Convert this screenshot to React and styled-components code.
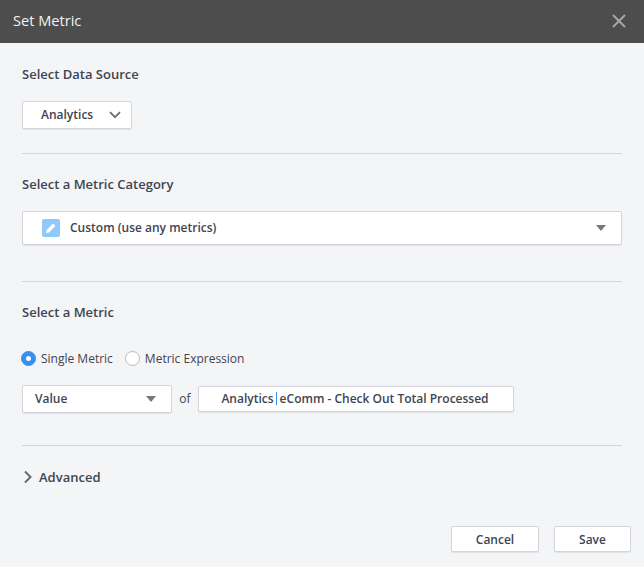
import React from "react";
import styled, { createGlobalStyle } from "styled-components";

const GlobalStyle = createGlobalStyle`
  html, body {
    margin: 0;
    padding: 0;
    background: #f4f5f7;
  }
  * {
    box-sizing: border-box;
  }
`;

const Dialog = styled.div`
  width: 644px;
  height: 567px;
  overflow: hidden;
  background: #f4f5f7;
  font-family: "Open Sans", sans-serif;
  color: #3f4450;
`;

const Header = styled.header`
  height: 43px;
  background: #4d4d4d;
  display: flex;
  align-items: center;
  justify-content: space-between;
  padding: 0 18px 1px 13px;
`;

const Title = styled.h1`
  margin: 0 0 2px;
  font-size: 14.6px;
  font-weight: 400;
  color: #f2f2f2;
`;

const Body = styled.div`
  padding: 0 22px;
`;

const Section = styled.section`
  height: ${({ $height }) => $height}px;
  padding-top: ${({ $top }) => $top}px;
  border-bottom: 1px solid ${({ $plain }) => ($plain ? "transparent" : "#d5d6da")};
`;

const Label = styled.h2`
  margin: 0;
  height: 18px;
  line-height: 18px;
  font-size: 13px;
  font-weight: 600;
  color: #3f4450;
`;

const whiteBox = `
  background: #fff;
  border: 1px solid #d3d5da;
  border-radius: 2px;
  box-shadow: 0 1px 1px rgba(0, 0, 0, 0.08);
`;

const SourceButton = styled.div`
  ${whiteBox}
  width: 110px;
  height: 28px;
  margin-top: 18px;
  padding: 0 10px 0 18px;
  display: flex;
  align-items: center;
  justify-content: space-between;
  font-size: 12px;
  font-weight: 600;
`;

const BoxText = styled.span`
  flex: ${({ $grow }) => ($grow ? 1 : "none")};
  margin-bottom: 2px;
`;

const CategorySelect = styled.div`
  ${whiteBox}
  height: 34px;
  margin-top: 18px;
  padding: 0 15px 0 19px;
  display: flex;
  align-items: center;
  font-size: 12px;
  font-weight: 600;
`;

const CategoryIcon = styled.span`
  width: 18px;
  height: 18px;
  margin-right: 10px;
  border-radius: 2px;
  background: #8fc8fb;
  display: flex;
  align-items: center;
  justify-content: center;
`;

const Caret = styled.span`
  width: 0;
  height: 0;
  border-left: 5.5px solid transparent;
  border-right: 5.5px solid transparent;
  border-top: 6px solid #77797e;
`;

const RadioRow = styled.div`
  margin-top: 27px;
  height: 20px;
  display: flex;
  align-items: center;
  font-size: 12px;
`;

const RadioMark = styled.span`
  width: 15px;
  height: 15px;
  margin-right: 5px;
  border-radius: 50%;
  background: ${({ $on }) => ($on ? "#3a8fee" : "#fff")};
  border: 1px solid ${({ $on }) => ($on ? "#3a8fee" : "#b9bbc0")};
  display: flex;
  align-items: center;
  justify-content: center;
  &::after {
    content: "";
    display: ${({ $on }) => ($on ? "block" : "none")};
    width: 5px;
    height: 5px;
    border-radius: 50%;
    background: #fff;
  }
`;

const RadioOption = styled.label`
  display: flex;
  align-items: center;
  margin-left: ${({ $gap }) => $gap}px;
`;

const MetricRow = styled.div`
  margin-top: 17px;
  display: flex;
  align-items: center;
  font-size: 12px;
`;

const ValueSelect = styled.div`
  ${whiteBox}
  width: 150px;
  height: 28px;
  padding: 0 15px 0 12px;
  display: flex;
  align-items: center;
  justify-content: space-between;
  font-weight: 600;
`;

const Of = styled.span`
  width: 26px;
  text-align: center;
  margin-bottom: 2px;
`;

const MetricInput = styled.div`
  ${whiteBox}
  width: 316px;
  height: 26px;
  display: flex;
  align-items: center;
  justify-content: center;
  font-weight: 600;
  padding-right: 2px;
`;

const Pipe = styled.span`
  display: inline-block;
  width: 1px;
  height: 13px;
  margin: 0 2.5px;
  background: #3a8fee;
  vertical-align: -2px;
`;

const Advanced = styled.div`
  display: flex;
  align-items: center;
  gap: 6px;
  margin-left: 1px;
  height: 20px;
  font-size: 13px;
  font-weight: 600;
`;

const Footer = styled.div`
  margin-top: 39px;
  margin-right: -9px;
  display: flex;
  justify-content: flex-end;
  gap: 15px;
`;

const Button = styled.button`
  ${whiteBox}
  width: ${({ $width }) => $width}px;
  height: 26px;
  padding: 0;
  font-family: inherit;
  font-size: 12px;
  font-weight: 600;
  color: #3f4450;
`;

const App = () => {
  return (
    <>
      <GlobalStyle />
      <Dialog>
        <Header>
          <Title>Set Metric</Title>
          <svg width="14" height="14" viewBox="0 0 14 14">
            <path d="M1 1L13 13M13 1L1 13" stroke="#a6a6a6" strokeWidth="2" fill="none" />
          </svg>
        </Header>
        <Body>
          <Section $height={111} $top={22}>
            <Label>Select Data Source</Label>
            <SourceButton>
              <BoxText>Analytics</BoxText>
              <svg width="12" height="8" viewBox="0 0 12 8">
                <path d="M1 1.2L6 6.2L11 1.2" stroke="#6b6d72" strokeWidth="1.8" fill="none" />
              </svg>
            </SourceButton>
          </Section>
          <Section $height={128} $top={21}>
            <Label>Select a Metric Category</Label>
            <CategorySelect>
              <CategoryIcon>
                <svg width="12" height="12" viewBox="0 0 12 12">
                  <path d="M1 11L1.6 8L8 1.6L10.4 4L4 10.4Z" fill="#fff" />
                </svg>
              </CategoryIcon>
              <BoxText $grow>Custom (use any metrics)</BoxText>
              <Caret />
            </CategorySelect>
          </Section>
          <Section $height={164} $top={21}>
            <Label>Select a Metric</Label>
            <RadioRow>
              <RadioOption $gap={-1}>
                <RadioMark $on />
                Single Metric
              </RadioOption>
              <RadioOption $gap={12}>
                <RadioMark />
                Metric Expression
              </RadioOption>
            </RadioRow>
            <MetricRow>
              <ValueSelect>
                <BoxText>Value</BoxText>
                <Caret />
              </ValueSelect>
              <Of>of</Of>
              <MetricInput>
                <BoxText>
                  Analytics<Pipe />eComm - Check Out Total Processed
                </BoxText>
              </MetricInput>
            </MetricRow>
          </Section>
          <Section $height={120} $top={21} $plain>
            <Advanced>
              <svg width="10" height="14" viewBox="0 0 10 14">
                <path d="M2 1.5L7.5 7L2 12.5" stroke="#66686d" strokeWidth="2" fill="none" />
              </svg>
              Advanced
            </Advanced>
            <Footer>
              <Button $width={88}>Cancel</Button>
              <Button $width={77}>Save</Button>
            </Footer>
          </Section>
        </Body>
      </Dialog>
    </>
  );
};

export default App;
